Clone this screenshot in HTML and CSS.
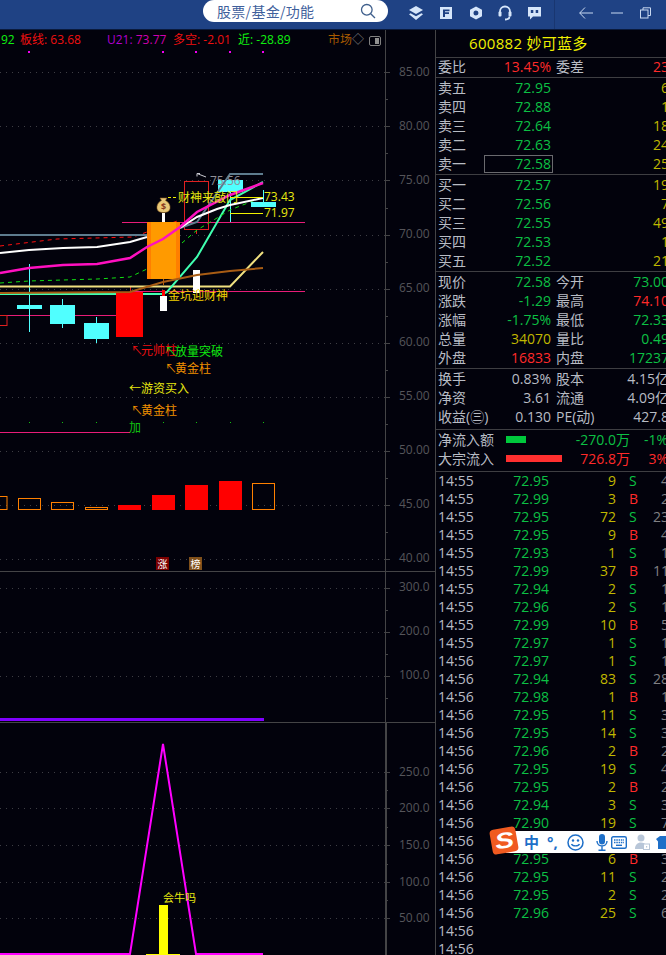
FILE: index.html
```html
<!DOCTYPE html>
<html lang="zh">
<head>
<meta charset="utf-8">
<title>600882 妙可蓝多</title>
<link rel="stylesheet" href="styles.css">
</head>
<body>
<div class="app">
  <header class="topbar">
    <div class="search">
      <span class="search-text">股票/基金/功能</span>
      <svg class="search-icon" width="16" height="16" viewBox="0 0 16 16"><circle cx="6.8" cy="6.8" r="5.3"/><path d="M10.7 10.7L15 15"/></svg>
    </div>
    <div class="tools">
      <svg class="tool" width="16" height="16" viewBox="0 0 16 16"><path class="solid" d="M8 1L15 5 8 9 1 5Z"/><path class="solid" d="M2.6 8.2L8 11.2l5.4-3L15 9.3 8 15 1 9.3Z"/></svg>
      <svg class="tool" width="14" height="14" viewBox="0 0 14 14"><path class="solid" fill-rule="evenodd" d="M1 1h12v12H1ZM4 3.500v7.500h2V8h4V6.300H6V5.200h4.500V3.500Z"/></svg>
      <svg class="tool" width="14" height="14" viewBox="0 0 14 14"><path class="solid" fill-rule="evenodd" d="M7 .5l6 3.300v6.400l-6 3.300-6-3.300V3.800ZM7 4.500a2.500 2.500 0 1 0 0 5 2.500 2.500 0 0 0 0-5Z"/></svg>
      <svg class="tool" width="14" height="16" viewBox="0 0 14 16"><path class="line" d="M2 9V6.500a5 5 0 0 1 10 0V9"/><rect class="solid" x="0.500" y="6.500" width="3" height="5" rx="1"/><rect class="solid" x="10.500" y="6.500" width="3" height="5" rx="1"/><path class="line" d="M11.500 11.500c0 2-2 3-4.500 3"/></svg>
      <svg class="tool" width="15" height="14" viewBox="0 0 15 14"><path class="solid" fill-rule="evenodd" d="M1 1h13v9.500H6L3 13.500v-3H1ZM3.800 4v3h2.500V4ZM8.700 4v3h2.500V4Z"/></svg>
    </div>
    <div class="win">
      <svg class="win-icon" width="14" height="12" viewBox="0 0 14 12"><path d="M6 .5L.7 6 6 11.500M.7 6H14"/></svg>
      <svg class="win-icon" width="12" height="12" viewBox="0 0 12 12"><path d="M0 6h12"/></svg>
      <svg class="win-icon" width="11" height="12" viewBox="0 0 11 12"><rect x=".5" y="3" width="7.500" height="8"/><path d="M3 3V.8h7.500v7.700H8"/></svg>
    </div>
  </header>

  <main class="main">
    <div class="chart">
      <svg class="canvas" width="435" height="925" viewBox="0 30 435 925">
        <!-- grid -->
        <g class="grid">
          <path d="M0 72.500H385M0 126.500H385M0 180.500H385M0 235.500H385M0 289.500H385M0 343.500H385M0 397.500H385M0 451.500H385M0 505.500H385M0 559.500H385"/>
          <path d="M0 588.500H385M0 632.500H385M0 676.500H385"/>
          <path d="M0 772.500H385M0 808.500H385M0 845.500H385M0 882.500H385M0 918.500H385"/>
        </g>
        <g class="axis">
          <path d="M385.500 30V722M0 571.500H435M0 722.500H435"/>
          <path d="M385 72.500h5M385 126.500h5M385 180.500h5M385 235.500h5M385 289.500h5M385 343.500h5M385 397.500h5M385 451.500h5M385 505.500h5M385 559.500h5M385 588.500h5M385 632.500h5M385 676.500h5"/>
          <path d="M385 99.500h3M385 153.500h3M385 208.500h3M385 262.500h3M385 316.500h3M385 370.500h3M385 424.500h3M385 478.500h3M385 532.500h3M385 610.500h3M385 654.500h3M385 698.500h3"/>
          <path d="M385 772.500h5M385 808.500h5M385 845.500h5M385 882.500h5M385 918.500h5M385 790.500h3M385 827.500h3M385 864.500h3M385 900.500h3"/>
          <path class="axis-thick" d="M386 722V955"/>
        </g>
        <g class="axis-label">
          <text x="399" y="75.500">85.00</text><text x="399" y="129.500">80.00</text><text x="399" y="183.500">75.00</text><text x="399" y="238">70.00</text><text x="399" y="292">65.00</text><text x="399" y="346">60.00</text><text x="399" y="400">55.00</text><text x="399" y="454">50.00</text><text x="399" y="508">45.00</text><text x="399" y="562">40.00</text>
          <text x="399" y="591">300.0</text><text x="399" y="635">200.0</text><text x="399" y="679">100.0</text>
          <text x="399" y="775.500">250.0</text><text x="399" y="811.500">200.0</text><text x="399" y="849">150.0</text><text x="399" y="885.500">100.0</text><text x="399" y="922">50.00</text>
        </g>

        <!-- legend -->
        <g class="legend">
          <text class="t-green" x="1" y="44">92</text>
          <text class="t-red" x="20" y="44">板线: 63.68</text>
          <text class="t-purple" x="107" y="44">U21: <tspan class="t-magenta">73.77</tspan></text>
          <text class="t-red" x="173" y="44">多空: -2.01</text>
          <text class="t-green" x="238" y="44">近: -28.89</text>
          <text class="t-brown" x="328" y="44">市场<tspan class="t-gray">◇</tspan></text>
        </g>
        <rect class="panel-toggle" x="369.500" y="36.500" width="11" height="9" rx="1.500"/>
        <rect class="panel-toggle-fill" x="375" y="38" width="4" height="6"/>
        <g class="dots-magenta"><rect x="28" y="51" width="2" height="2"/><rect x="162" y="51" width="2" height="2"/><rect x="195" y="51" width="2" height="2"/><rect x="229" y="51" width="2" height="2"/><rect x="262" y="51" width="2" height="2"/></g>

        <!-- horizontal pink levels -->
        <path class="pink-level" d="M122 222.500H305M130 291.500H305M0 315.500H116M0 432.500H130"/>
        <rect class="red-outline" x="-3" y="315.500" width="10" height="10"/>

        <!-- wicks -->
        <path class="wick-cyan" d="M29.500 264V332M62.500 299V328M96.500 317V343M230.500 192V222M263.500 190V203"/>
        <path class="wick-red" d="M130.500 287V292M196.500 229V234"/>

        <!-- moving lines -->
        <polyline class="l-dash-red" points="0,246 57,239 133,237 147,232 180,220"/>
        <polyline class="l-paleyellow" points="0,286.500 230,286.500 263,252"/>
        <polyline class="l-aqua" points="0,294 163,294 167,292 197,257 230,200 263,182"/>
        <polyline class="l-slate" points="0,235 147,235"/>
        <polyline class="l-dash-green" points="0,283 29,281 97,279 130,277 147,269"/>

        <!-- candles -->
        <rect class="c-cyan" x="17" y="305" width="25" height="4"/>
        <rect class="c-cyan" x="50" y="305" width="25" height="19"/>
        <rect class="c-cyan" x="84" y="323" width="25" height="16"/>
        <rect class="c-red" x="116" y="292" width="27" height="45"/>
        <path class="wick-white" d="M163.500 213V222"/>
        <rect class="c-orange-dark" x="147" y="222" width="33" height="57"/>
        <rect class="c-orange" x="151" y="222" width="25" height="57"/>
        <path class="wick-orange" d="M163.500 279V285"/>
        <rect class="c-red" x="162" y="290" width="3" height="6"/>
        <rect class="c-white" x="160" y="296" width="7" height="15"/>
        <rect class="c-white" x="193" y="270" width="7" height="23"/>
        <rect class="c-cyan" x="218" y="180" width="25" height="12"/>
        <rect class="c-cyan" x="251" y="202" width="25" height="5"/>
        <rect class="red-outline" x="184.500" y="181.500" width="24" height="48"/>
        <polyline class="l-brown" points="0,293 130,292 163,282 197,275 230,271 263,268"/>
        <polyline class="l-dash-green" points="182,243 197,230 217,218 230,210 263,197"/>
        <polyline class="l-slate" points="180,228 197,222 217,193 230,174 263,174"/>
        <polyline class="l-white" points="0,253 29,250 63,248 97,247 130,242 147,237"/>
        <polyline class="l-white" points="180,228 197,217 217,209 230,205 263,198"/>
        <polyline class="l-magenta" points="0,273 29,268 63,265 97,264 130,258 147,247 163,239 180,227 197,212 230,195 263,183"/>
        <path class="l-yellow-thin" d="M230 197.500H263M230 213.500H263"/>
        <path class="l-yellow-dash" d="M168 197.500h10"/>
        <path class="peak-arrow" d="M197 173.500l9 3.500M197 173.500v3M197 173.500h3"/>

        <!-- money bag -->
        <path class="bag" d="M160 198h7l-1.500 2.500c3.500 1.800 5 5 4.500 8-.5 3-3 4-6.500 4s-6-1-6.500-4c-.5-3 1-6.200 4.500-8Z"/>
        <text class="bag-text" x="163.500" y="210">$</text>

        <!-- annotations -->
        <g class="note">
          <text class="t-gray2" x="210" y="184.500">75.56</text>
          <text class="t-yellow" x="178" y="201.500">财神来敲门</text>
          <text class="t-yellow" x="264" y="201">73.43</text>
          <text class="t-yellow" x="264" y="217">71.97</text>
          <text class="t-gold" x="168" y="300">金坑迎财神</text>
          <text class="t-red" x="131" y="355">↖<tspan dx="-2">元帅柱</tspan></text>
          <text class="t-lime" x="165" y="356">↖<tspan dx="-2">放量突破</tspan></text>
          <text class="t-orange" x="165" y="373">↖<tspan dx="-2">黄金柱</tspan></text>
          <text class="t-yellow" x="129" y="393">←游资买入</text>
          <text class="t-orange" x="131" y="415">↖<tspan dx="-2">黄金柱</tspan></text>
          <text class="t-lime2" x="129" y="432">加</text>
        </g>
        <g class="dots-green"><rect x="29" y="422" width="1" height="1"/><rect x="62" y="422" width="1" height="1"/><rect x="96" y="422" width="1" height="1"/><rect x="163" y="422" width="1" height="1"/><rect x="196" y="422" width="1" height="1"/><rect x="230" y="422" width="1" height="1"/><rect x="263" y="422" width="1" height="1"/></g>

        <!-- volume-like bars -->
        <g class="bar-hollow">
          <rect x="-5" y="496.500" width="12" height="13"/><rect x="18.500" y="498.500" width="22" height="11"/><rect x="51.500" y="502.500" width="22" height="7"/><rect x="85.500" y="507.500" width="22" height="2"/><rect x="252.500" y="483.500" width="22" height="26"/>
        </g>
        <g class="bar-solid">
          <rect x="118" y="505" width="23" height="5"/><rect x="152" y="495" width="23" height="15"/><rect x="185" y="485" width="23" height="25"/><rect x="219" y="481" width="23" height="29"/>
        </g>

        <!-- badges -->
        <rect class="badge-red" x="156" y="557" width="13" height="13"/>
        <rect class="badge-brown" x="189" y="557" width="13" height="13"/>
        <text class="badge-text" x="162.500" y="567.500">涨</text>
        <text class="badge-text" x="195.500" y="567.500">榜</text>

        <!-- lower panes -->
        <path class="l-purple" d="M0 719.500H264"/>
        <polyline class="l-spike" points="0,954 130,954 163,744 196,954 263,954"/>
        <rect class="bar-yellow" x="159" y="905" width="9" height="50"/>
        <rect class="bar-yellow" x="146" y="954" width="34" height="1"/>
        <text class="note-small" x="163" y="902">会牛吗</text>
      </svg>
    </div>

    <aside class="panel">
      <div class="title"><span class="code">600882 妙可蓝多</span></div>

      <div class="sec ratio">
        <div class="row"><span>委比</span><span class="num red">13.45%</span><span class="lab2">委差</span><span class="num red">23</span></div>
      </div>

      <div class="sec">
        <div class="row"><span>卖五</span><span class="num green">72.95</span><span class="num yellow c4">6</span></div>
        <div class="row"><span>卖四</span><span class="num green">72.88</span><span class="num yellow c4">1</span></div>
        <div class="row"><span>卖三</span><span class="num green">72.64</span><span class="num yellow c4">18</span></div>
        <div class="row"><span>卖二</span><span class="num green">72.63</span><span class="num yellow c4">24</span></div>
        <div class="row"><span>卖一</span><span class="num green sel">72.58</span><span class="num yellow c4">25</span></div>
      </div>

      <div class="sec">
        <div class="row"><span>买一</span><span class="num green">72.57</span><span class="num yellow c4">19</span></div>
        <div class="row"><span>买二</span><span class="num green">72.56</span><span class="num yellow c4">7</span></div>
        <div class="row"><span>买三</span><span class="num green">72.55</span><span class="num yellow c4">49</span></div>
        <div class="row"><span>买四</span><span class="num green">72.53</span><span class="num yellow c4">1</span></div>
        <div class="row"><span>买五</span><span class="num green">72.52</span><span class="num yellow c4">21</span></div>
      </div>

      <div class="sec">
        <div class="row"><span>现价</span><span class="num green">72.58</span><span class="lab2">今开</span><span class="num green">73.00</span></div>
        <div class="row"><span>涨跌</span><span class="num green">-1.29</span><span class="lab2">最高</span><span class="num red">74.10</span></div>
        <div class="row"><span>涨幅</span><span class="num green">-1.75%</span><span class="lab2">最低</span><span class="num green">72.33</span></div>
        <div class="row"><span>总量</span><span class="num yellow">34070</span><span class="lab2">量比</span><span class="num green">0.49</span></div>
        <div class="row"><span>外盘</span><span class="num red">16833</span><span class="lab2">内盘</span><span class="num green">17237</span></div>
      </div>

      <div class="sec sec-tall">
        <div class="row"><span>换手</span><span class="num">0.83%</span><span class="lab2">股本</span><span class="num">4.15亿</span></div>
        <div class="row"><span>净资</span><span class="num">3.61</span><span class="lab2">流通</span><span class="num">4.09亿</span></div>
        <div class="row"><span class="nowrap">收益(㊂)</span><span class="num">0.130</span><span class="lab2 nowrap">PE(动)</span><span class="num">427.8</span></div>
      </div>

      <div class="sec sec-tall">
        <div class="flow"><span>净流入额</span><span class="flow-mid"><i class="bar bar-in"></i><span class="green">-270.0万</span></span><span class="num green">-1%</span></div>
        <div class="flow"><span>大宗流入</span><span class="flow-mid"><i class="bar bar-out"></i><span class="red">726.8万</span></span><span class="num red">3%</span></div>
      </div>

      <div class="trades">
        <div class="trade"><span>14:55</span><span class="num green">72.95</span><span class="num yellow">9</span><span class="side green">S</span><span class="num gray">4</span></div>
        <div class="trade"><span>14:55</span><span class="num green">72.99</span><span class="num yellow">3</span><span class="side red">B</span><span class="num gray">2</span></div>
        <div class="trade"><span>14:55</span><span class="num green">72.95</span><span class="num yellow">72</span><span class="side green">S</span><span class="num gray">23</span></div>
        <div class="trade"><span>14:55</span><span class="num green">72.95</span><span class="num yellow">9</span><span class="side red">B</span><span class="num gray">4</span></div>
        <div class="trade"><span>14:55</span><span class="num green">72.93</span><span class="num yellow">1</span><span class="side green">S</span><span class="num gray">1</span></div>
        <div class="trade"><span>14:55</span><span class="num green">72.99</span><span class="num yellow">37</span><span class="side red">B</span><span class="num gray">11</span></div>
        <div class="trade"><span>14:55</span><span class="num green">72.94</span><span class="num yellow">2</span><span class="side green">S</span><span class="num gray">1</span></div>
        <div class="trade"><span>14:55</span><span class="num green">72.96</span><span class="num yellow">2</span><span class="side green">S</span><span class="num gray">1</span></div>
        <div class="trade"><span>14:55</span><span class="num green">72.99</span><span class="num yellow">10</span><span class="side red">B</span><span class="num gray">5</span></div>
        <div class="trade"><span>14:55</span><span class="num green">72.97</span><span class="num yellow">1</span><span class="side green">S</span><span class="num gray">1</span></div>
        <div class="trade"><span>14:56</span><span class="num green">72.97</span><span class="num yellow">1</span><span class="side green">S</span><span class="num gray">1</span></div>
        <div class="trade"><span>14:56</span><span class="num green">72.94</span><span class="num yellow">83</span><span class="side green">S</span><span class="num gray">28</span></div>
        <div class="trade"><span>14:56</span><span class="num green">72.98</span><span class="num yellow">1</span><span class="side red">B</span><span class="num gray">1</span></div>
        <div class="trade"><span>14:56</span><span class="num green">72.95</span><span class="num yellow">11</span><span class="side green">S</span><span class="num gray">3</span></div>
        <div class="trade"><span>14:56</span><span class="num green">72.95</span><span class="num yellow">14</span><span class="side green">S</span><span class="num gray">3</span></div>
        <div class="trade"><span>14:56</span><span class="num green">72.96</span><span class="num yellow">2</span><span class="side red">B</span><span class="num gray">2</span></div>
        <div class="trade"><span>14:56</span><span class="num green">72.95</span><span class="num yellow">19</span><span class="side green">S</span><span class="num gray">4</span></div>
        <div class="trade"><span>14:56</span><span class="num green">72.95</span><span class="num yellow">2</span><span class="side red">B</span><span class="num gray">2</span></div>
        <div class="trade"><span>14:56</span><span class="num green">72.94</span><span class="num yellow">3</span><span class="side green">S</span><span class="num gray">3</span></div>
        <div class="trade"><span>14:56</span><span class="num green">72.90</span><span class="num yellow">19</span><span class="side green">S</span><span class="num gray">7</span></div>
        <div class="trade"><span>14:56</span></div>
        <div class="trade"><span>14:56</span><span class="num green">72.95</span><span class="num yellow">6</span><span class="side red">B</span><span class="num gray">3</span></div>
        <div class="trade"><span>14:56</span><span class="num green">72.95</span><span class="num yellow">11</span><span class="side green">S</span><span class="num gray">2</span></div>
        <div class="trade"><span>14:56</span><span class="num green">72.95</span><span class="num yellow">2</span><span class="side green">S</span><span class="num gray">2</span></div>
        <div class="trade"><span>14:56</span><span class="num green">72.96</span><span class="num yellow">25</span><span class="side green">S</span><span class="num gray">6</span></div>
        <div class="trade"><span>14:56</span></div>
        <div class="trade"><span>14:56</span></div>
      </div>
    </aside>
  </main>

  <div class="ime">
    <div class="ime-logo"><span>S</span></div>
    <div class="ime-bar">
      <span class="ime-zh">中</span>
      <span class="ime-punc">°,</span>
      <svg class="ime-icon m12" width="17" height="17" viewBox="0 0 17 17"><circle cx="8.500" cy="8.500" r="7.500" fill="none" stroke="#1e6fc8" stroke-width="1.500"/><circle cx="6" cy="6.500" r="1.200" fill="#1e6fc8"/><circle cx="11" cy="6.500" r="1.200" fill="#1e6fc8"/><path d="M4.500 10c1 2.500 7 2.500 8 0" fill="none" stroke="#1e6fc8" stroke-width="1.300"/></svg>
      <svg class="ime-icon m3" width="12" height="17" viewBox="0 0 12 17"><rect x="3" y="0" width="6" height="10.500" rx="3" fill="#1e6fc8"/><path d="M1 7c0 6.500 10 6.500 10 0M6 12.500V16M2.500 16.300h7" fill="none" stroke="#1e6fc8" stroke-width="1.400"/></svg>
      <svg class="ime-icon m8" width="16" height="13" viewBox="0 0 16 13"><rect x=".7" y=".7" width="14.600" height="11.600" rx="1.500" fill="none" stroke="#1e6fc8" stroke-width="1.400"/><path d="M3 4h10M3 6.500h10" stroke="#1e6fc8" stroke-width="1.400" stroke-dasharray="1.500 .8" fill="none"/><path d="M5 9.300h6" stroke="#1e6fc8" stroke-width="1.400" fill="none"/></svg>
      <svg class="ime-icon m6" width="15" height="16" viewBox="0 0 15 16"><circle cx="6" cy="4" r="3.500" fill="#b8c6d8"/><path d="M0 15c0-4 2.500-6.500 6-6.500 2.500 0 4 1 5 2.500H8v4Z" fill="#b8c6d8"/><rect x="8.500" y="10" width="6" height="5.500" fill="#fff" stroke="#b8c6d8"/><rect x="11" y="12" width="1.200" height="1.500" fill="#b8c6d8"/></svg>
      <svg class="ime-icon" width="14" height="14" viewBox="0 0 14 14"><path d="M4 1h6l4 3-2 2.500V14H2V6.500L0 4Z" fill="#1e6fc8"/></svg>
    </div>
  </div>
</div>
</body>
</html>
```
FILE: styles.css
```css
* { box-sizing: border-box; }
html, body { margin: 0; padding: 0; width: 666px; height: 955px; overflow: hidden; background: #02020c; }
body { font-family: "Open Sans", "Noto Sans CJK SC", sans-serif; font-size: 14px; color: #b8bcc4; }
.app { position: relative; width: 666px; height: 955px; overflow: hidden; }

/* top bar */
.topbar { height: 30px; background: #1f4284; display: flex; align-items: flex-start; padding-left: 203px; border-bottom: 1px solid #0a1a3c; }
.search { width: 185px; height: 22px; background: #fff; border-radius: 11px; display: flex; align-items: center; justify-content: space-between; padding: 0 12px 0 14px; }
.search-text { font-family: "Noto Sans CJK SC", sans-serif; font-size: 14px; line-height: 20px; letter-spacing: .3px; color: #3f5f9c; }
.search-icon { fill: none; stroke: #3f5f8c; stroke-width: 1.300; }
.tools { width: 167px; height: 29px; display: flex; align-items: center; justify-content: space-between; padding: 0 12px 3px 20px; border-right: 1px solid #193670; }
.tool .solid { fill: #d6e6fa; }
.tool .line { fill: none; stroke: #d6e6fa; stroke-width: 1.800; }
.win { flex: 1; height: 29px; display: flex; align-items: center; justify-content: space-between; padding: 0 15px 3px 24px; }
.win-icon { fill: none; stroke: #c8d8f0; stroke-width: 1; }

/* main split */
.main { display: flex; height: 925px; }
.chart { width: 435px; height: 925px; flex: none; }
.canvas { display: block; font-family: "Open Sans", "Noto Sans CJK SC", sans-serif; }

/* chart: grid and axis */
.grid path { fill: none; stroke: #3e3e44; stroke-width: 1; stroke-dasharray: 1 5; }
.axis path { fill: none; stroke: #444446; stroke-width: 1; }
.axis .axis-thick { stroke-width: 2; }
.axis-label text { font-size: 12px; fill: #55555a; }

/* chart: legend */
.legend text { font-size: 12px; }
.t-green { fill: #10f010; }
.t-red { fill: #f01010; }
.t-purple { fill: #b000d0; }
.t-magenta { fill: #d000b0; }
.t-brown { fill: #a85a00; }
.t-gray { fill: #808080; }
.t-gray2 { fill: #909098; }
.t-yellow { fill: #e8e810; }
.t-gold { fill: #f0d000; }
.t-orange { fill: #f09000; }
.t-lime { fill: #10e810; }
.t-lime2 { fill: #10c010; }
.panel-toggle { fill: none; stroke: #808080; }
.panel-toggle-fill { fill: #909090; }
.dots-magenta rect { fill: #f000f0; }
.dots-green rect { fill: #10c010; }

/* chart: price pane */
.pink-level { fill: none; stroke: #e81c78; stroke-width: 1; }
.red-outline { fill: none; stroke: #e02020; stroke-width: 1; }
.wick-cyan { fill: none; stroke: #50ffff; stroke-width: 1; }
.wick-red { fill: none; stroke: #e02020; stroke-width: 1; }
.wick-white { fill: none; stroke: #fff; stroke-width: 3; }
.wick-orange { fill: none; stroke: #c06000; stroke-width: 1; }
.c-cyan { fill: #50ffff; }
.c-red { fill: #ff0000; }
.c-white { fill: #ffffff; }
.c-orange { fill: #ff9a00; }
.c-orange-dark { fill: #ff7f00; }
.l-dash-red, .l-dash-green, .l-paleyellow, .l-aqua, .l-slate, .l-brown, .l-white, .l-magenta, .l-spike, .l-purple, .l-yellow-thin, .l-yellow-dash, .peak-arrow { fill: none; }
.l-dash-red { stroke: #ff1010; stroke-width: 1; stroke-dasharray: 4 4; }
.l-dash-green { stroke: #10e010; stroke-width: 1; stroke-dasharray: 4 4; }
.l-paleyellow { stroke: #f0e080; stroke-width: 2; }
.l-aqua { stroke: #40ffb0; stroke-width: 2; }
.l-slate { stroke: #5e7c8e; stroke-width: 2; }
.l-brown { stroke: #a85c14; stroke-width: 2; }
.l-white { stroke: #fff; stroke-width: 2; }
.l-magenta { stroke: #ff10c0; stroke-width: 2.500; }
.l-yellow-thin { stroke: #f0f000; stroke-width: 1; }
.l-yellow-dash { stroke: #f0f000; stroke-width: 1; stroke-dasharray: 3 2; }
.peak-arrow { stroke: #c8c8d0; stroke-width: 1; }
.bag { fill: #e8c878; stroke: #8a5a20; stroke-width: .6; }
.bag-text { font-size: 9px; font-weight: 700; fill: #8a3a20; text-anchor: middle; }
.note text { font-size: 12px; }

/* chart: volume bars, badges */
.bar-hollow rect { fill: none; stroke: #ff8000; stroke-width: 1; }
.bar-solid rect { fill: #ff0000; }
.badge-red { fill: #7c0000; }
.badge-brown { fill: #80501a; }
.badge-text { font-size: 10px; fill: #fff; text-anchor: middle; }

/* chart: lower panes */
.l-purple { stroke: #8000ff; stroke-width: 3; }
.l-spike { stroke: #ff00ff; stroke-width: 2; }
.bar-yellow { fill: #ffff00; }
.note-small { font-size: 11px; fill: #e8e810; }

/* right panel */
.panel { width: 231px; flex: none; height: 925px; border-left: 1px solid #444446; overflow: hidden; line-height: 19px; }
.title { height: 28px; border-bottom: 1px solid #3e3e42; padding-left: 33px; line-height: 26px; }
.code { font-size: 15px; letter-spacing: .3px; color: #f0f000; }
.sec { padding-top: 1px; border-bottom: 1px solid #3e3e42; }
.ratio { padding-top: 0; height: 20px; }
.sec-tall { padding-bottom: 2px; }
.row { width: 233px; padding: 0 0 2px 2px; height: 19px; line-height: 17px; display: grid; grid-template-columns: 28px 85px 33px 1fr; align-items: center; white-space: nowrap; }
.lab2 { margin-left: 5px; }
.c4 { grid-column: 4; }
.num { text-align: right; }
.nowrap { white-space: nowrap; }
.sel { justify-self: end; width: 69px; height: 18px; line-height: 16px; border: 1px solid #6a6a6e; padding-right: 1px; margin: 0 -2px -1px 0; }
.green { color: #0cc044; }
.red { color: #ff2a2a; }
.yellow { color: #c0b800; }
.gray { color: #808084; }

.flow { width: 232px; padding: 0 0 2px 2px; height: 19px; line-height: 17px; display: grid; grid-template-columns: 68px 124px 38px; align-items: center; white-space: nowrap; }
.flow-mid { display: flex; justify-content: space-between; align-items: center; }
.bar { display: block; height: 7px; }
.bar-in { width: 20px; background: #00c83c; }
.bar-out { width: 56px; background: #ff2f2f; }

.trades { width: 233px; line-height: 18px; }
.trade { height: 18px; padding-left: 2px; display: grid; grid-template-columns: 40px 71px 67px 33px 20px; white-space: nowrap; }
.side { padding-left: 13px; }

/* floating input-method bar */
.ime { position: absolute; left: 490px; top: 827px; width: 176px; height: 28px; }
.ime-logo { position: absolute; left: 1px; top: 1px; width: 26px; height: 25px; background: #f05a20; border-radius: 4px; transform: rotate(-10deg); display: flex; align-items: center; justify-content: center; z-index: 1; }
.ime-logo span { display: block; font-family: "Liberation Sans", sans-serif; font-size: 22px; line-height: 24px; font-weight: 700; font-style: italic; color: #fff; transform: scaleX(1.3); }
.ime-bar { position: absolute; left: 16px; top: 4px; right: 0; height: 22px; background: #fff; display: flex; align-items: center; padding-left: 18px; overflow: hidden; }
.ime-zh { flex: none; font-family: "Noto Sans CJK SC", sans-serif; font-size: 15px; line-height: 20px; font-weight: 700; color: #1e6fc8; width: 23px; }
.ime-punc { flex: none; font-size: 15px; line-height: 20px; font-weight: 700; color: #1e6fc8; width: 20px; }
.ime-icon { flex: none; }
.m12 { margin-right: 12px; }
.m3 { margin-right: 3px; }
.m8 { margin-right: 8px; }
.m6 { margin-right: 6px; }
```
